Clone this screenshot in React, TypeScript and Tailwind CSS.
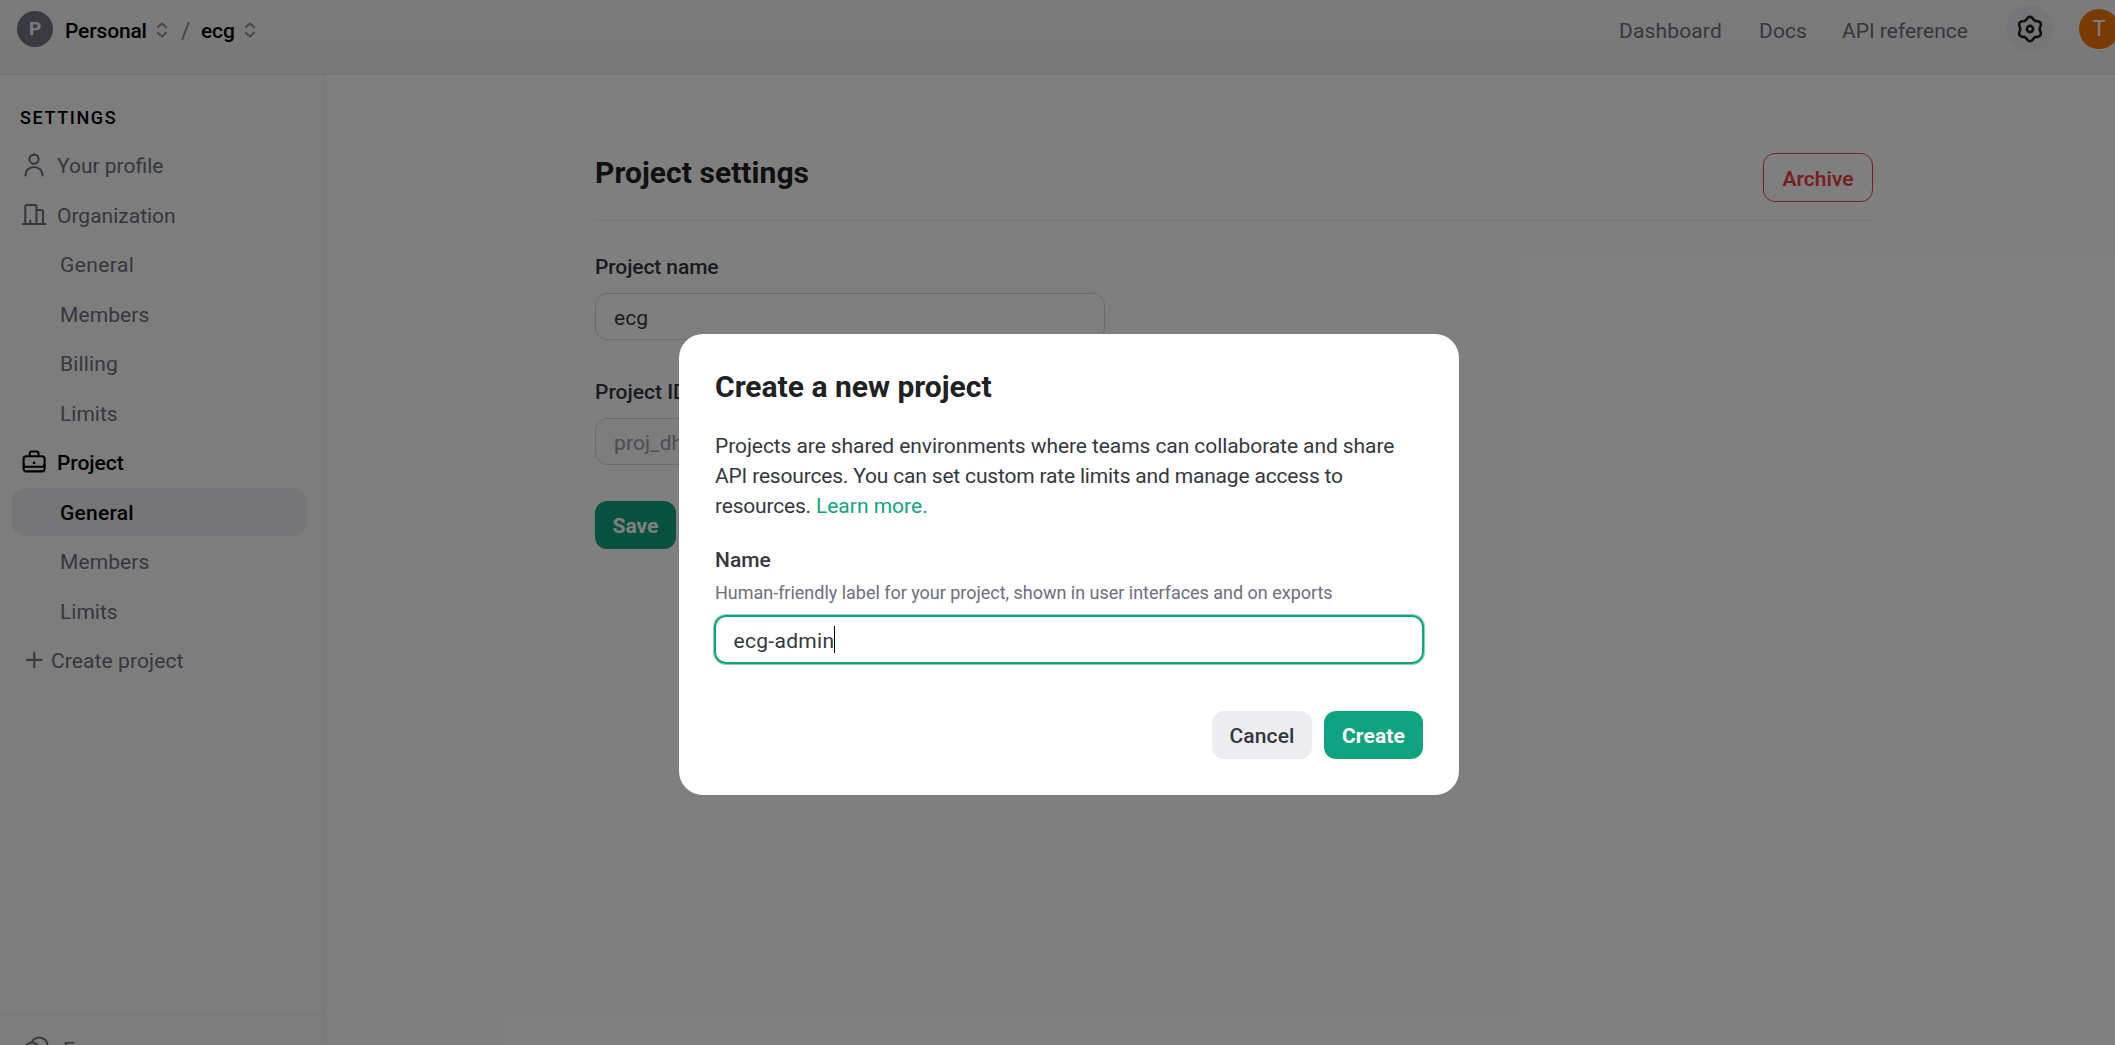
import type { ReactNode } from "react";

function UpDown() {
  return (
    <svg className="h-4 w-3 shrink-0 text-[#8e8ea0]" viewBox="0 0 12 16" fill="none" stroke="currentColor" strokeWidth="2" strokeLinecap="round" strokeLinejoin="round">
      <path d="M1.8 5.2 6 1.6l4.2 3.6M1.8 10.8 6 14.4l4.2-3.6" />
    </svg>
  );
}

function Icon({ children }: { children: ReactNode }) {
  return (
    <svg className="h-6 w-6 shrink-0" viewBox="0 0 24 24" fill="none" stroke="currentColor" strokeWidth="2.1" strokeLinecap="round" strokeLinejoin="round">
      {children}
    </svg>
  );
}

const gearPath =
  Array.from({ length: 72 }, (_, i) => {
    const a = (i * 5 * Math.PI) / 180;
    const r = 10.9 + 1.25 * Math.cos(6 * a);
    return `${i ? "L" : "M"}${(14 + r * Math.sin(a)).toFixed(2)} ${(14 - r * Math.cos(a)).toFixed(2)}`;
  }).join("") + "Z";

function Gear() {
  return (
    <svg className="h-7 w-7 text-[#202123]" viewBox="0 0 28 28" fill="none" stroke="currentColor" strokeWidth="2.6" strokeLinejoin="round">
      <path d={gearPath} />
      <circle cx="14" cy="14" r="3.1" />
    </svg>
  );
}

function SectionRow({ icon, label, active = false }: { icon: ReactNode; label: string; active?: boolean }) {
  return (
    <div className={`flex h-12 items-center gap-[11px] pl-[10px] ${active ? "font-medium tracking-[-0.05px] text-black" : "text-[#6e6e80]"}`}>
      <Icon>{icon}</Icon>
      <span className="pt-0.5">{label}</span>
    </div>
  );
}

function SubRow({ label, track, active = false }: { label: string; track: string; active?: boolean }) {
  return (
    <div className={`flex h-12 items-center rounded-xl pl-12 pt-0.5 ${active ? "bg-[#ececf1] font-medium text-black" : "text-[#6e6e80]"} ${track}`}>
      {label}
    </div>
  );
}

function Header() {
  return (
    <header className="flex h-[75px] items-start justify-between border-b border-[#e9e9ec] bg-linear-to-b from-[#f7f7f7] to-[#f1f1f1] pl-[17px] pr-[19px]">
      <div className="flex h-[58px] items-center font-medium text-black">
        <div className="flex h-9 w-9 items-center justify-center rounded-full bg-[#747486] text-[19px] font-bold text-[#f7f7f8]">P</div>
        <span className="w-[91px] pl-3 pt-[3px] tracking-[-0.15px]">Personal</span>
        <div className="flex w-9 items-center pl-3 pt-[1px]">
          <UpDown />
        </div>
        <svg className="mt-1 h-5 w-3 text-[#8e8ea0]" viewBox="0 0 12 20" fill="none" stroke="currentColor" strokeWidth="2">
          <path d="M9 1 2 19" />
        </svg>
        <span className="w-[52px] pl-[9px] pt-[3px] tracking-[-0.15px]">ecg</span>
        <div className="pt-[1px]">
          <UpDown />
        </div>
      </div>
      <nav className="flex h-[58px] items-center text-[#6e6e80]">
        <span className="w-[140px] pt-[3px] tracking-[0.15px]">Dashboard</span>
        <span className="w-[83px] pt-[3px] tracking-[0.1px]">Docs</span>
        <span className="w-[164px] pt-[3px]">API reference</span>
        <div className="flex h-12 w-12 items-center justify-center rounded-full bg-[#ececf1]">
          <Gear />
        </div>
        <div className="ml-[25px] flex h-10 w-10 items-center justify-center rounded-full bg-[#f57600] text-[22px] text-white">T</div>
      </nav>
    </header>
  );
}

function Sidebar() {
  return (
    <aside className="flex w-[325px] shrink-0 flex-col border-r border-[#ececf1] bg-[#fbfbfb]">
      <div className="flex flex-1 flex-col gap-[1.5px] pl-3 pr-[18px] pt-[29px]">
        <div className="mb-[8.9px] pl-2 text-[18px] font-medium leading-[27px] tracking-[1.6px] text-black">SETTINGS</div>
        <SectionRow
          label="Your profile"
          icon={
            <>
              <circle cx="12" cy="6.2" r="4.6" />
              <path d="M3.5 22.5V22a8.5 8 0 0 1 17 0v.5" />
            </>
          }
        />
        <SectionRow
          label="Organization"
          icon={<path d="M.8 21h22.6M3.3 21V3.5A1.5 1.5 0 0 1 4.8 2h8.2a1.5 1.5 0 0 1 1.5 1.5V21M14.5 7H19a2 2 0 0 1 2 2v12M8.3 21v-3.5" />}
        />
        <SubRow label="General" track="tracking-[0.4px]" />
        <SubRow label="Members" track="tracking-[0.1px]" />
        <SubRow label="Billing" track="tracking-[0.15px]" />
        <SubRow label="Limits" track="tracking-normal" />
        <SectionRow
          active
          label="Project"
          icon={
            <>
              <rect x="1.6" y="6.2" width="21" height="15.2" rx="2.6" />
              <path d="M7.7 6V3.2A1.7 1.7 0 0 1 9.4 1.5h5.4a1.7 1.7 0 0 1 1.7 1.7V6M1.6 14.6a2.2 2.2 0 0 0 2.2 2.2h16.6a2.2 2.2 0 0 0 2.2-2.2" />
              <circle cx="12.1" cy="12.9" r="1.4" fill="currentColor" stroke="none" />
            </>
          }
        />
        <SubRow active label="General" track="tracking-[0.25px]" />
        <SubRow label="Members" track="tracking-[0.1px]" />
        <SubRow label="Limits" track="tracking-normal" />
        <div className="flex h-12 items-center gap-[5px] pl-[10px] tracking-[0.1px] text-[#6e6e80]">
          <Icon>
            <path d="M12.3 4.6v14.6M5 11.9h14.6" />
          </Icon>
          <span className="pt-0.5">Create project</span>
        </div>
      </div>
      <div className="h-[115px] shrink-0 border-t border-[#ececf1]">
        <div className="flex items-start pl-6 pt-[21px] text-[#6e6e80]">
          <svg className="h-6 w-[26px]" viewBox="0 0 26 24" fill="none" stroke="currentColor" strokeWidth="2">
            <circle cx="15.3" cy="9.6" r="8.2" />
            <circle cx="8" cy="14" r="7.6" className="fill-[#fbfbfb]" />
          </svg>
          <span className="pl-[13px] pt-0.5 leading-6">Forum</span>
        </div>
      </div>
    </aside>
  );
}

function Settings() {
  return (
    <main className="flex-1 bg-white pl-[270px] pt-[78px]">
      <div className="w-[1278px]">
        <div className="flex items-start justify-between border-b border-[#ececf1] pb-[18px]">
          <h1 className="text-[30px] font-bold leading-[39px] tracking-[0.05px] text-[#202123]">Project settings</h1>
          <button className="flex h-[49px] w-[110px] items-center justify-center rounded-xl border border-[#ef4146] pt-0.5 font-semibold text-[#ef4146]">Archive</button>
        </div>
        <div className="mt-[30.5px] font-medium leading-[30px] tracking-[-0.1px] text-[#353740]">Project name</div>
        <div className="mt-[11.5px] flex h-[46.5px] w-[510px] items-center rounded-xl border border-[#d9d9e3] pl-[18px] pt-[3px] text-[#353740]">ecg</div>
        <div className="mt-[37.5px] font-medium leading-[30px] text-[#353740]">Project ID</div>
        <div className="mt-[11px] flex h-[46.5px] w-[510px] items-center rounded-xl border border-[#d9d9e3] bg-[#fafafa] pl-[18px] pt-[3px] tracking-[0.1px] text-[#9a9aab]">proj_dh</div>
        <button className="mt-[36.5px] flex h-12 w-[81px] items-center justify-center rounded-xl bg-[#10a37f] pt-0.5 font-bold text-white">Save</button>
      </div>
    </main>
  );
}

function CreateDialog() {
  return (
    <div className="h-[461px] w-[780px] rounded-3xl bg-white px-9 pt-[34.5px] text-[#353740]">
      <h2 className="text-[30px] font-bold leading-9 text-[#202123]">Create a new project</h2>
      <p className="mt-[26.5px] whitespace-nowrap leading-[30px]">
        <span className="tracking-[-0.08px]">Projects are shared environments where teams can collaborate and share</span>
        <br />
        <span className="tracking-[-0.18px]">API resources. You can set custom rate limits and manage access to</span>
        <br />
        <span className="tracking-[-0.2px]">resources. </span>
        <a className="text-[#10a37f]">Learn more.</a>
      </p>
      <div className="mt-6 font-medium leading-[30px]">Name</div>
      <div className="mt-[3.5px] text-[18px] leading-[27px] tracking-[-0.02px] text-[#6e6e80]">Human-friendly label for your project, shown in user interfaces and on exports</div>
      <div className="-mx-px mt-[9.5px] flex h-[49px] items-center rounded-xl border-2 border-[#10a37f] pl-[17.5px] shadow-[0_0_0_1px_rgba(16,163,127,0.5)]">
        <span className="pt-0.5 tracking-[0.31px]">ecg-admin</span>
        <span className="h-[27px] w-px bg-black" />
      </div>
      <div className="mt-[47px] flex justify-end gap-3">
        <button className="flex h-12 w-[100px] items-center justify-center rounded-xl bg-[#ececf1] pt-0.5 font-medium tracking-[0.15px]">Cancel</button>
        <button className="flex h-12 w-[99px] items-center justify-center rounded-xl bg-[#10a37f] pt-0.5 font-bold tracking-[0.15px] text-white">Create</button>
      </div>
    </div>
  );
}

export default function App() {
  return (
    <div className="h-[1045px] w-[2115px] overflow-hidden font-[Roboto,'Liberation_Sans',sans-serif] text-[21px] leading-6">
      <div className="relative flex h-[1129px] w-[2138px] flex-col">
        <Header />
        <div className="flex flex-1">
          <Sidebar />
          <Settings />
        </div>
        <div className="absolute inset-0 flex items-center justify-center bg-black/50">
          <CreateDialog />
        </div>
      </div>
    </div>
  );
}
